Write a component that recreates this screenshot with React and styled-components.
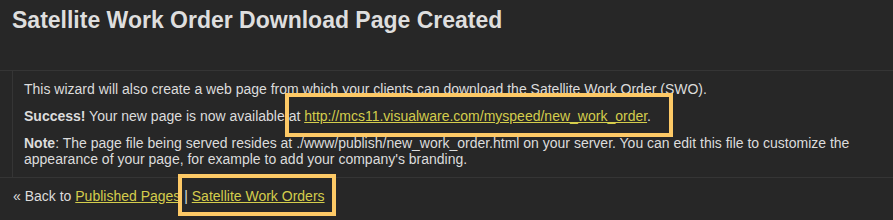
import React from 'react';
import styled, { createGlobalStyle } from 'styled-components';

const GlobalStyle = createGlobalStyle`
  html, body {
    margin: 0;
    padding: 0;
    background: #272727;
  }
  body {
    font-family: "Liberation Sans", Arial, sans-serif;
    color: #dcdcdc;
    overflow: hidden;
  }
`;

const Page = styled.div`
  position: relative;
  width: 893px;
  height: 220px;
  background: #272727;
`;

const Title = styled.h2`
  margin: 0;
  padding: 7px 12px 0;
  font-size: 23px;
  line-height: 26px;
  font-weight: bold;
  color: #dedede;
  height: 62px;
  box-sizing: border-box;
`;

const Section = styled.div`
  border-top: 1px solid #353535;
  border-bottom: 1px solid #353535;
  padding-left: 12px;
  margin-top: 8px;
`;

const Panel = styled.div`
  border-left: 1px solid #353535;
  padding: 10px 0 10px 11px;
  font-size: 14px;
  line-height: 16px;
`;

const Para = styled.p`
  margin: 0 0 11px;
  &:last-child {
    margin-bottom: 0;
  }
`;

const Link = styled.a`
  color: #d4cd4c;
  text-decoration: underline;
`;

const Footer = styled.div`
  padding: 10px 13px;
  font-size: 14px;
  line-height: 16px;
`;

const Highlight = styled.div`
  position: absolute;
  border: 4px solid #fdc966;
  box-sizing: border-box;
  pointer-events: none;
`;

export default function App() {
  return (
    <Page>
      <GlobalStyle />
      <Title>Satellite Work Order Download Page Created</Title>
      <Section>
        <Panel>
          <Para>
            This wizard will also create a web page from which your clients can
            download the Satellite Work Order (SWO).
          </Para>
          <Para>
            <b>Success!</b> Your new page is now available at{' '}
            <Link href="#">http://mcs11.visualware.com/myspeed/new_work_order</Link>.
          </Para>
          <Para>
            <b>Note</b>: The page file being served resides at
            ./www/publish/new_work_order.html on your server. You can edit this
            file to customize the appearance of your page, for example to add
            your company's branding.
          </Para>
        </Panel>
      </Section>
      <Footer>
        « Back to <Link href="#">Published Pages</Link> |{' '}
        <Link href="#">Satellite Work Orders</Link>
      </Footer>
      <Highlight style={{ left: 285, top: 93, width: 388, height: 44 }} />
      <Highlight style={{ left: 178, top: 174, width: 158, height: 42 }} />
    </Page>
  );
}
